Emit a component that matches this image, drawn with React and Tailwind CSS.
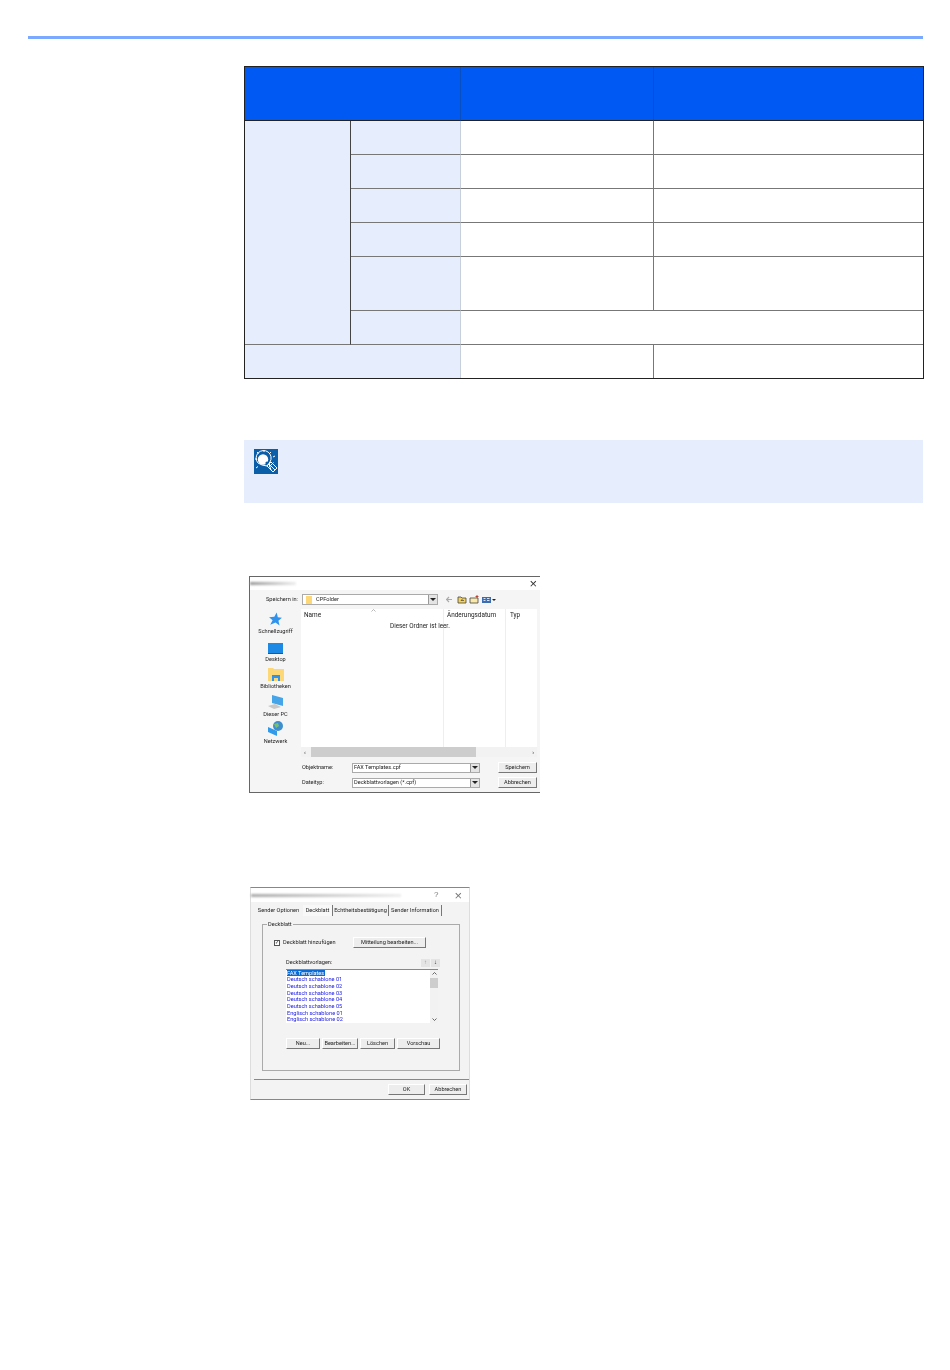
import React from 'react';

const dialogFont = "font-['Roboto',sans-serif] text-[#222]";

const Cell = ({ className = '' }) => <div className={`border-r border-b border-[#777] ${className}`} />;

const SpecTable = () => (
  <div className="w-[680px] border border-[#222] grid grid-cols-[106px_110px_193px_269px] grid-rows-[54px_34px_34px_34px_34px_54px_34px_33px]">
    {/* Header */}
    <div className="col-span-2 bg-[#0059f2] border-b border-r border-b-[#222] border-r-[#0a4fc0]" />
    <div className="bg-[#0059f2] border-b border-r border-b-[#222] border-r-[#0a4fc0]" />
    <div className="bg-[#0059f2] border-b border-b-[#222]" />

    {/* Left label column */}
    <div className="row-span-6 bg-[#e6edfc] border-r border-b border-r-[#444] border-b-[#777]" />

    {[0, 1, 2, 3, 4].map(i => (
      <React.Fragment key={i}>
        <div className="bg-[#e6edfc] border-b border-r border-b-[#777] border-r-[#c8cfdc]" />
        <Cell />
        <div className="border-b border-[#777]" />
      </React.Fragment>
    ))}

    <div className="bg-[#e6edfc] border-b border-r border-b-[#777] border-r-[#c8cfdc]" />
    <div className="col-span-2 border-b border-[#777]" />

    {/* Last row */}
    <div className="col-span-2 bg-[#e6edfc] border-r border-r-[#c8cfdc]" />
    <div className="border-r border-[#777]" />
    <div />
  </div>
);

const BulbIcon = () => (
  <svg width="24" height="25" viewBox="0 0 24 25" className="block">
    <rect width="24" height="25" fill="#0b5ea8" />
    <g fill="none" stroke="#fff" strokeWidth="1">
      <path d="M3 3l1.5 1.5M10 1v2M17 3l-1.5 1.5M1 10h2M2 19l2-1.5M21 7l-2 1" />
      <path d="M4 14a7.5 7.5 0 1 1 12 -1l-2 2-1 2-5-1z" />
    </g>
    <circle cx="9" cy="10.5" r="5.2" fill="#fff" />
    <circle cx="13" cy="14" r="1.6" fill="#0b5ea8" />
    <g stroke="#fff" strokeWidth="1" fill="#0b5ea8">
      <path d="M13 17l4-4 6 6-4 4z" />
      <path d="M15 15l6 6M17 21l-2-6M14.5 18.5l5-5" fill="none" />
    </g>
  </svg>
);

const ComboArrow = () => (
  <div className="w-[9px] h-full bg-[#e4e4e4] border-l border-[#999] flex items-center justify-center">
    <div className="w-0 h-0 border-x-[3px] border-x-transparent border-t-[3px] border-t-[#222]" />
  </div>
);

const DlgButton = ({ label, className = '' }) => (
  <div className={`h-[11px] flex items-center justify-center bg-[#ededed] border border-t-white border-l-white border-r-[#777] border-b-[#777] text-[5.6px] leading-none whitespace-nowrap ${className}`}>
    {label}
  </div>
);

const SideItem = ({ icon, label }) => (
  <div className="h-[27.4px] flex flex-col items-center justify-end">
    {icon}
    <span className="text-[5.6px] leading-[7px] mt-[2px] whitespace-nowrap">{label}</span>
  </div>
);

const StarIcon = () => (
  <svg width="15" height="14" viewBox="0 0 24 24"><path d="M14 1l2 8 7 1-6 5 2 8-7-5-9 4 4-8-6-5 9-1z" fill="#2f93ee" /></svg>
);
const DesktopIcon = () => <div className="w-[15px] h-[11px] bg-[#1e88e5] border-b border-[#0b5ea8]" />;
const LibIcon = () => (
  <svg width="16" height="13" viewBox="0 0 16 13">
    <path d="M0 0h5l1 1h10v12H0z" fill="#fcd878" />
    <path d="M4 7h8v6h-2v-3H6v3H4z" fill="#2f93ee" />
  </svg>
);
const PcIcon = () => (
  <svg width="17" height="14" viewBox="0 0 17 14">
    <path d="M5 0l11 3v8L5 8z" fill="#45a5e8" />
    <path d="M1 11l7-2 6 3-7 2z" fill="#c8c8c8" />
  </svg>
);
const NetIcon = () => (
  <svg width="16" height="15" viewBox="0 0 16 15">
    <circle cx="10" cy="5" r="5" fill="#3d8fd0" />
    <path d="M6 3l4-1 1 3-3 2z" fill="#7cc06a" />
    <path d="M0 6l9 4v5L0 11z" fill="#2f9bea" />
  </svg>
);

const ToolbarIcons = () => (
  <svg width="50" height="9" viewBox="0 0 50 9" className="ml-[8px]">
    <path d="M0 4.5h6M3 2L0.5 4.5 3 7" fill="none" stroke="#aaa" strokeWidth="1.2" />
    <path d="M12 2h3l1 1h4v5h-8z" fill="#f6d25c" stroke="#444" strokeWidth="0.8" />
    <path d="M15 5.5h3M15 5.5l1.5-1.5" stroke="#444" strokeWidth="0.7" fill="none" />
    <path d="M24 3h8v5h-8z" fill="#fbe9a8" stroke="#444" strokeWidth="0.8" />
    <path d="M31 0v3M29.5 1.5h3" stroke="#b02a1a" strokeWidth="0.8" />
    <rect x="36" y="2" width="9" height="6" fill="#3d6db0" />
    <path d="M37.5 3.5h2M37.5 5.5h2M41 3.5h2.5M41 5.5h2.5" stroke="#fff" strokeWidth="0.8" />
    <path d="M46 4h4l-2 2z" fill="#222" />
  </svg>
);

const SaveDialog = () => (
  <div className={`w-[291px] h-[217px] bg-[#f5f5f5] border-t border-l border-b border-[#666] blur-[0.35px] flex flex-col ${dialogFont}`}>
    <div className="h-[13px] shrink-0 bg-white flex items-center justify-between pr-[3px]">
      <div className="w-[46px] h-[3px] bg-gradient-to-r from-[#999] to-[#eee] blur-[1px]" />
      <span className="text-[13px] leading-none font-['Liberation_Sans',sans-serif] text-[#333]">×</span>
    </div>

    {/* Location row */}
    <div className="h-[19px] shrink-0 flex items-center pl-[16px]">
      <span className="w-[36px] text-[5.6px] leading-none whitespace-nowrap">Speichern in:</span>
      <div className="w-[136px] h-[11px] bg-white border border-[#aaa] flex items-center justify-between">
        <div className="flex items-center gap-[4px] pl-[3px]">
          <div className="w-[6px] h-[8px] bg-[#fcd878]" />
          <span className="text-[5.6px] leading-none">CPFolder</span>
        </div>
        <ComboArrow />
      </div>
      <ToolbarIcons />
    </div>

    {/* Sidebar and file list */}
    <div className="flex h-[148px] shrink-0">
      <div className="w-[51px] -mt-[1px]">
        <SideItem icon={<StarIcon />} label="Schnellzugriff" />
        <SideItem icon={<DesktopIcon />} label="Desktop" />
        <SideItem icon={<LibIcon />} label="Bibliotheken" />
        <SideItem icon={<PcIcon />} label="Dieser PC" />
        <SideItem icon={<NetIcon />} label="Netzwerk" />
      </div>
      <div className="relative w-[236px] flex flex-col bg-white">
        <div className="flex-1 grid grid-cols-[143px_62px_31px] text-[6.4px] leading-none">
          <div className="pl-[3px] pt-[3px] border-r border-[#eee]">Name</div>
          <div className="pl-[3px] pt-[3px] border-r border-[#eee] whitespace-nowrap">Änderungsdatum</div>
          <div className="pl-[4px] pt-[3px]">Typ</div>
        </div>
        {/* Sort caret and empty-folder message over the list */}
        <svg width="5" height="3" viewBox="0 0 5 3" className="absolute top-0 left-[70px]">
          <path d="M0.5 2.5L2.5 0.5 4.5 2.5" fill="none" stroke="#999" strokeWidth="0.7" />
        </svg>
        <span className="absolute top-[14px] left-[89px] text-[6.3px] leading-none whitespace-nowrap">Dieser Ordner ist leer.</span>
        <div className="h-[10px] bg-[#f2f2f2] flex items-center px-[3px] gap-[5px]">
          <span className="text-[6px] leading-none">‹</span>
          <div className="w-[165px] h-full bg-[#cdcdcd]" />
          <span className="ml-auto text-[6px] leading-none">›</span>
        </div>
      </div>
    </div>

    {/* File name rows */}
    <div className="pl-[52px] pt-[5px] flex flex-col gap-[4px]">
      <div className="flex items-center">
        <span className="w-[50px] text-[5.6px] leading-none">Objektname:</span>
        <div className="w-[128px] h-[10px] bg-white border border-[#aaa] flex items-center justify-between pl-[1px]">
          <span className="text-[5.6px] leading-none">FAX Templates.cpf</span>
          <ComboArrow />
        </div>
        <DlgButton label="Speichern" className="ml-[18px] w-[39px]" />
      </div>
      <div className="flex items-center">
        <span className="w-[50px] text-[5.6px] leading-none">Dateityp:</span>
        <div className="w-[128px] h-[10px] bg-white border border-[#aaa] flex items-center justify-between pl-[1px]">
          <span className="text-[5.6px] leading-none">Deckblattvorlagen (*.cpf)</span>
          <ComboArrow />
        </div>
        <DlgButton label="Abbrechen" className="ml-[18px] w-[39px]" />
      </div>
    </div>
  </div>
);

const templates = [
  'Deutsch schablone 01',
  'Deutsch schablone 02',
  'Deutsch schablone 03',
  'Deutsch schablone 04',
  'Deutsch schablone 05',
  'Englisch schablone 01',
  'Englisch schablone 02',
];

const tabs = [
  { label: 'Sender Optionen', className: 'w-[49px]' },
  { label: 'Deckblatt', className: 'w-[30px] border-r border-[#777] bg-[#f8f8f8]' },
  { label: 'Echtheitsbestätigung', className: 'w-[56px] border-r border-[#777]' },
  { label: 'Sender Information', className: 'w-[53px] border-r border-[#777]' },
];

const CoverDialog = () => (
  <div className={`w-[220px] h-[213px] bg-[#f3f3f3] border-t border-b border-[#7a8a9a] border-x border-x-[#ddd] blur-[0.35px] flex flex-col ${dialogFont}`}>
    <div className="h-[14px] bg-white flex items-center justify-between pr-[7px]">
      <div className="w-[150px] h-[3px] bg-gradient-to-r from-[#aaa] via-[#ccc] to-[#eee] blur-[1px]" />
      <div className="flex items-center gap-[16px] text-[#777] text-[8px] leading-none font-['Liberation_Sans',sans-serif]">
        <span>?</span>
        <span className="text-[13px]">×</span>
      </div>
    </div>

    {/* Tabs */}
    <div className="h-[14px] pl-[3px] pt-[3px] flex items-stretch">
      {tabs.map(t => (
        <div key={t.label} className={`flex items-center justify-center text-[5.6px] leading-none whitespace-nowrap ${t.className}`}>
          {t.label}
        </div>
      ))}
    </div>

    {/* Deckblatt group box */}
    <div className="relative ml-[11px] mt-[8px] w-[198px] h-[147px] border border-[#aaa] pl-[23px] pr-[19px]">
      <span className="absolute -top-[3px] left-[4px] px-[1px] bg-[#f3f3f3] text-[5.6px] leading-none">Deckblatt</span>

      <div className="flex items-center h-[11px] mt-[12px] -ml-[12px]">
        <div className="w-[6px] h-[6px] bg-white border border-[#555] flex items-center justify-center text-[5px] leading-none">✓</div>
        <span className="ml-[3px] w-[70px] text-[5.6px] leading-none whitespace-nowrap">Deckblatt hinzufügen</span>
        <DlgButton label="Mitteilung bearbeiten..." className="w-[73px]" />
      </div>

      <div className="flex items-center justify-between h-[9px] mt-[10px]">
        <span className="text-[5.6px] leading-none">Deckblattvorlagen:</span>
        <div className="flex gap-[1px]">
          <div className="w-[9px] h-[8px] bg-[#e4e4e4] text-[#999] text-[6px] leading-none text-center font-bold">↑</div>
          <div className="w-[9px] h-[8px] bg-[#e4e4e4] text-[#222] text-[6px] leading-none text-center font-bold">↓</div>
        </div>
      </div>

      <div className="mt-[2px] w-[152px] h-[54px] bg-white border-t border-[#888] flex">
        <div className="flex-1 pl-[1px] -mt-[0.5px] text-[5.6px] leading-[6.7px] text-[#1a1ae6]">
          <div className="w-fit pr-[1px] bg-[#0a6ad6] text-white">FAX Templates</div>
          {templates.map(name => <div key={name} className="whitespace-nowrap">{name}</div>)}
        </div>
        <div className="w-[8px] bg-[#f2f2f2] flex flex-col items-center text-[5px] leading-none">
          <svg width="5" height="8" viewBox="0 0 5 8"><path d="M0.5 4.5L2.5 2.5 4.5 4.5" fill="none" stroke="#444" strokeWidth="0.8" /></svg>
          <div className="w-full h-[10px] bg-[#cdcdcd]" />
          <svg width="5" height="8" viewBox="0 0 5 8" className="mt-auto"><path d="M0.5 3.5L2.5 5.5 4.5 3.5" fill="none" stroke="#444" strokeWidth="0.8" /></svg>
        </div>
      </div>

      <div className="flex gap-[2px] mt-[15px] w-[154px]">
        <DlgButton label="Neu..." className="w-[34px]" />
        <DlgButton label="Bearbeiten..." className="w-[36px]" />
        <DlgButton label="Löschen" className="w-[35px]" />
        <DlgButton label="Vorschau" className="w-[43px]" />
      </div>
    </div>

    {/* Footer */}
    <div className="ml-[3px] mt-[8px] border-t border-[#888] flex justify-end gap-[4px] pt-[4px] pr-[2px]">
      <DlgButton label="OK" className="w-[37px]" />
      <DlgButton label="Abbrechen" className="w-[38px]" />
    </div>
  </div>
);

export default function App() {
  return (
    <div className="w-[950px] h-[1370px] bg-white pt-[36px] overflow-hidden">
      <div className="ml-[28px] w-[895px] h-[3px] bg-[#7aa9ff]" />
      <div className="ml-[244px] mt-[27px] w-[680px]">
        <SpecTable />
        <div className="mt-[61px] h-[63px] w-[679px] bg-[#e6edfc] pl-[10px] pt-[9px]">
          <BulbIcon />
        </div>
        <div className="ml-[5px] mt-[73px]">
          <SaveDialog />
        </div>
        <div className="ml-[6px] mt-[94px]">
          <CoverDialog />
        </div>
      </div>
    </div>
  );
}
